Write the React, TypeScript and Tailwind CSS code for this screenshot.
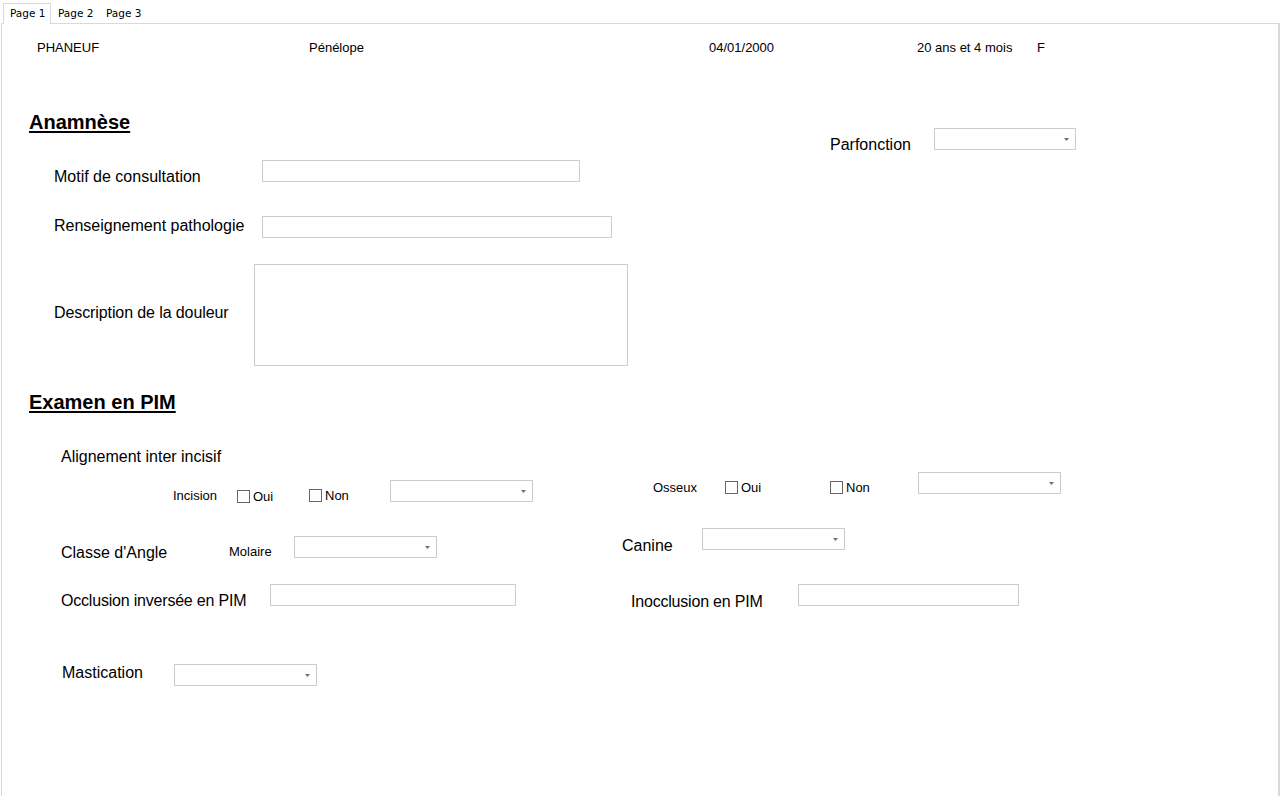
import React from "react";

const Combo = ({ w, mt = 0 }: { w: string; mt?: string }) => (
  <div className={`relative ${w} h-[22px] shrink-0 border border-[#cccccc] bg-white ${mt}`}>
    <svg className="absolute right-[6px] top-[9px]" width="5" height="3" viewBox="0 0 5 3">
      <path d="M0 0H5L2.5 3Z" fill="#707070" />
    </svg>
  </div>
);

const Box = ({ w, h = "h-[22px]", mt = "" }: { w: string; h?: string; mt?: string }) => (
  <div className={`${w} ${h} shrink-0 border border-[#cccccc] bg-white ${mt}`} />
);

const Check = ({ label, w, mt }: { label: string; w: string; mt: string }) => (
  <div className={`flex ${w} shrink-0 items-center ${mt}`}>
    <span className="w-[13px] h-[13px] border border-[#666666] bg-white shrink-0" />
    <span className="ml-[3px] text-[13px] leading-[15px]">{label}</span>
  </div>
);

export default function App() {
  return (
    <div
      className="w-[1281px] h-[796px] overflow-hidden bg-white text-black"
      style={{ fontFamily: '"Liberation Sans", Arial, sans-serif' }}
    >
      {/* Tab strip */}
      <div className="flex h-[24px] pl-[3px] pt-[3px]" style={{ fontFamily: '"DejaVu Sans", Tahoma, sans-serif' }}>
        <div className="relative z-10 w-[48px] h-[21px] border border-b-0 border-[#d9d9d9] bg-white pl-[6px] pt-[3px] text-[10.5px] leading-[13px]">
          Page 1
        </div>
        <div className="w-[48px] h-[21px] pl-[7px] pt-[4px] text-[10.5px] leading-[13px]">Page 2</div>
        <div className="w-[48px] h-[21px] pl-[7px] pt-[4px] text-[10.5px] leading-[13px]">Page 3</div>
      </div>

      {/* Panel */}
      <div className="ml-[1px] -mt-[1px] w-[1279px] h-[780px] border-t border-l border-r-2 border-[#d9d9d9]">
        {/* Header */}
        <div className="flex pl-[35px] pt-[16px] h-[32px] text-[13px] leading-[16px]">
          <span className="w-[272px] shrink-0">PHANEUF</span>
          <span className="w-[400px] shrink-0">Pénélope</span>
          <span className="w-[208px] shrink-0">04/01/2000</span>
          <span className="w-[120px] shrink-0">20 ans et 4 mois</span>
          <span>F</span>
        </div>

        {/* Anamnèse block */}
        <div className="flex">
          <div className="w-[640px] shrink-0 flex flex-col">
            <h2 className="ml-[27px] mt-[55px] h-[23px] w-fit text-[20px] leading-[23px] font-bold underline underline-offset-[2px] decoration-[2px]">
              Anamnèse
            </h2>
            <div className="flex h-[22px] mt-[26px] pl-[52px] text-[16px] leading-[18px]">
              <span className="w-[208px] shrink-0 mt-[8px]">Motif de consultation</span>
              <Box w="w-[318px]" />
            </div>
            <div className="flex h-[22px] mt-[34px] pl-[52px] text-[16px] leading-[18px]">
              <span className="w-[208px] shrink-0 mt-[1px]">Renseignement pathologie</span>
              <Box w="w-[350px]" />
            </div>
            <div className="flex h-[102px] mt-[26px] pl-[52px] text-[16px] leading-[18px]">
              <span className="w-[200px] shrink-0 mt-[40px] tracking-[-0.1px]">Description de la douleur</span>
              <Box w="w-[374px]" h="h-[102px]" />
            </div>
          </div>
          <div className="flex ml-[188px] text-[16px] leading-[18px]">
            <span className="w-[104px] shrink-0 mt-[80px] h-[18px]">Parfonction</span>
            <Combo w="w-[142px]" mt="mt-[72px]" />
          </div>
        </div>

        {/* Examen en PIM */}
        <h2 className="ml-[27px] mt-[25px] h-[23px] text-[20px] leading-[23px] font-bold underline underline-offset-[2px] decoration-[2px] w-fit">
          Examen en PIM
        </h2>
        <div className="ml-[59px] mt-[34px] h-[18px] text-[16px] leading-[18px]">Alignement inter incisif</div>

        {/* Incision / Osseux */}
        <div className="flex items-start mt-[6px] h-[30px] pl-[171px] text-[13px] leading-[15px]">
          <span className="w-[64px] shrink-0 mt-[16px]">Incision</span>
          <Check label="Oui" w="w-[72px]" mt="mt-[17px]" />
          <Check label="Non" w="w-[81px]" mt="mt-[16px]" />
          <Combo w="w-[143px]" mt="mt-[8px]" />
          <span className="w-[120px] shrink-0" />
          <span className="w-[72px] shrink-0 mt-[8px]">Osseux</span>
          <Check label="Oui" w="w-[105px]" mt="mt-[8px]" />
          <Check label="Non" w="w-[88px]" mt="mt-[8px]" />
          <Combo w="w-[143px]" mt="mt-0" />
        </div>

        {/* Classe d'Angle / Canine */}
        <div className="flex items-start mt-[26px] h-[34px] pl-[59px]">
          <span className="w-[168px] shrink-0 mt-[16px] text-[16px] leading-[18px]">Classe d'Angle</span>
          <span className="w-[65px] shrink-0 mt-[16px] text-[13px] leading-[15px]">Molaire</span>
          <Combo w="w-[143px]" mt="mt-[8px]" />
          <span className="w-[185px] shrink-0" />
          <span className="w-[80px] shrink-0 mt-[9px] text-[16px] leading-[18px]">Canine</span>
          <Combo w="w-[143px]" mt="mt-0" />
        </div>

        {/* Occlusion */}
        <div className="flex items-start mt-[22px] h-[26px] pl-[59px] text-[16px] leading-[18px]">
          <span className="w-[209px] shrink-0 mt-[8px] tracking-[-0.2px]">Occlusion inversée en PIM</span>
          <Box w="w-[246px]" />
          <span className="w-[115px] shrink-0" />
          <span className="w-[167px] shrink-0 mt-[9px] tracking-[-0.2px]">Inocclusion en PIM</span>
          <Box w="w-[221px]" />
        </div>

        {/* Mastication */}
        <div className="flex items-start mt-[54px] pl-[60px] text-[16px] leading-[18px]">
          <span className="w-[112px] shrink-0 mt-0">Mastication</span>
          <Combo w="w-[143px]" />
        </div>
      </div>
    </div>
  );
}
